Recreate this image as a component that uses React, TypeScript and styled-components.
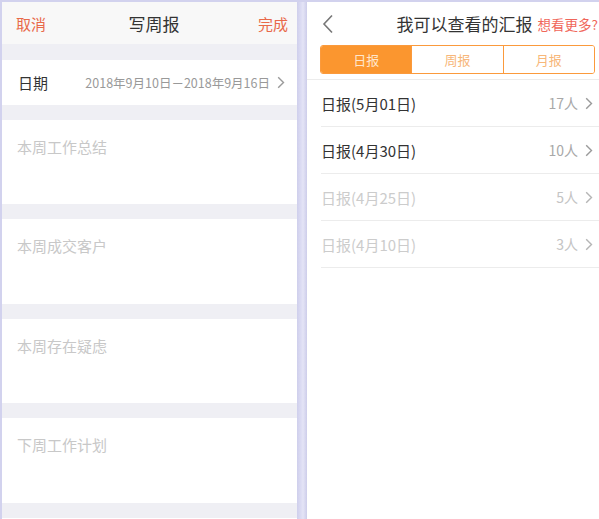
import React from "react";
import styled, { createGlobalStyle } from "styled-components";

const Global = createGlobalStyle`
  html, body { margin: 0; padding: 0; }
  body { font-family: "Noto Sans CJK SC", "Liberation Sans", sans-serif; }
`;

const Frame = styled.div`
  display: flex;
  height: 519px;
  width: 599px;
  padding: 2px 0 0 2px;
  box-sizing: border-box;
  background: #d2d2ee;
  overflow: hidden;
`;

const Panel = styled.div<{ $w?: number }>`
  ${(p) => (p.$w ? `width: ${p.$w}px;` : "flex: 1;")}
  flex-shrink: 0;
  display: flex;
  flex-direction: column;
  background: #ffffff;
  overflow: hidden;
  & > * { flex-shrink: 0; }
`;

const Divider = styled.div`
  width: 10px;
  flex-shrink: 0;
  background: linear-gradient(90deg, #cfcfec 0%, #dcdcf3 40%, #e4e4f6 60%, #cdcdea 100%);
`;

const NavBar = styled.div`
  height: 42px;
  display: flex;
  align-items: center;
  justify-content: space-between;
  padding: 0 9px 0 14px;
  background: #f8f8f8;
`;

const NavLink = styled.span`
  color: #e8694a;
  font-size: 15px;
`;

const NavTitle = styled.span`
  color: #333;
  font-size: 17px;
  margin-left: 4px;
`;

const Gap = styled.div<{ $h: number }>`
  height: ${(p) => p.$h}px;
  background: #efeff4;
`;

const DateRow = styled.div`
  height: 45px;
  display: flex;
  align-items: center;
  padding: 0 12px 0 16px;
  background: #fff;
`;

const DateLabel = styled.span`
  font-size: 15px;
  color: #333;
`;

const DateValue = styled.span`
  margin-left: auto;
  font-size: 12.5px;
  color: #999;
`;

const Chevron = styled.svg`
  width: 8px;
  height: 13px;
  margin-left: 7px;
  flex-shrink: 0;
`;

const Section = styled.div<{ $h: number }>`
  height: ${(p) => p.$h}px;
  padding: 16px 15px 0;
  box-sizing: border-box;
  background: #fff;
  font-size: 15px;
  color: #c8c8c8;
`;

const RightHeader = styled.div`
  height: 43px;
  display: flex;
  align-items: center;
`;

const Back = styled.svg`
  width: 12px;
  height: 20px;
  margin-left: 15px;
`;

const RightTitle = styled.span`
  margin-left: auto;
  font-size: 17px;
  color: #333;
  white-space: nowrap;
`;

const More = styled.span`
  margin-left: 5px;
  margin-right: 1px;
  font-size: 13.5px;
  color: #f0665a;
  white-space: nowrap;
`;

const Segments = styled.div`
  margin: 0 4px 0 13px;
  height: 27px;
  display: flex;
  border: 1px solid #fb9a3c;
  border-radius: 3px;
  overflow: hidden;
`;

const Segment = styled.div<{ $active?: boolean }>`
  flex: 1;
  display: flex;
  align-items: center;
  justify-content: center;
  font-size: 13px;
  color: ${(p) => (p.$active ? "#ffe6cc" : "#f7b77a")};
  background: ${(p) => (p.$active ? "#fb962f" : "#fff")};
  & + & { border-left: 1px solid #fb9a3c; }
`;

const TopLine = styled.div`
  height: 1px;
  background: #ececec;
  margin-top: 5px;
`;

const List = styled.div`
  padding-left: 14px;
`;

const Row = styled.div<{ $dim?: boolean }>`
  height: 46px;
  display: flex;
  align-items: center;
  padding-right: 6px;
  border-bottom: 1px solid #ececec;
  color: ${(p) => (p.$dim ? "#cccccc" : "#333")};
  font-size: 15px;
`;

const Count = styled.span<{ $dim?: boolean }>`
  margin-left: auto;
  font-size: 14px;
  color: ${(p) => (p.$dim ? "#c4c4c4" : "#a8a8a8")};
`;

const ChevronIcon = ({ color = "#9a9a9a" }: { color?: string }) => (
  <Chevron viewBox="0 0 8 13">
    <path d="M1.2 1.2 L6.5 6.5 L1.2 11.8" fill="none" stroke={color} strokeWidth="1.4" />
  </Chevron>
);

const rows = [
  { label: "日报(5月01日)", count: "17人", dim: false },
  { label: "日报(4月30日)", count: "10人", dim: false },
  { label: "日报(4月25日)", count: "5人", dim: true },
  { label: "日报(4月10日)", count: "3人", dim: true },
];

const sections = [
  { text: "本周工作总结", h: 84 },
  { text: "本周成交客户", h: 85 },
  { text: "本周存在疑虑", h: 84 },
  { text: "下周工作计划", h: 85 },
];

export default function App() {
  return (
    <>
      <Global />
      <Frame>
        <Panel $w={295}>
          <NavBar>
            <NavLink>取消</NavLink>
            <NavTitle>写周报</NavTitle>
            <NavLink>完成</NavLink>
          </NavBar>
          <Gap $h={16} />
          <DateRow>
            <DateLabel>日期</DateLabel>
            <DateValue>2018年9月10日－2018年9月16日</DateValue>
            <ChevronIcon />
          </DateRow>
          <Gap $h={15} />
          {sections.map((s) => (
            <React.Fragment key={s.text}>
              <Section $h={s.h}>{s.text}</Section>
              <Gap $h={15} />
            </React.Fragment>
          ))}
        </Panel>
        <Divider />
        <Panel>
          <RightHeader>
            <Back viewBox="0 0 12 20">
              <path d="M10 1.5 L2 10 L10 18.5" fill="none" stroke="#777" strokeWidth="1.6" />
            </Back>
            <RightTitle>我可以查看的汇报</RightTitle>
            <More>想看更多?</More>
          </RightHeader>
          <Segments>
            <Segment $active>日报</Segment>
            <Segment>周报</Segment>
            <Segment>月报</Segment>
          </Segments>
          <TopLine />
          <List>
            {rows.map((r) => (
              <Row key={r.label} $dim={r.dim}>
                {r.label}
                <Count $dim={r.dim}>{r.count}</Count>
                <ChevronIcon color={r.dim ? "#b5b5b5" : "#9a9a9a"} />
              </Row>
            ))}
          </List>
        </Panel>
      </Frame>
    </>
  );
}
